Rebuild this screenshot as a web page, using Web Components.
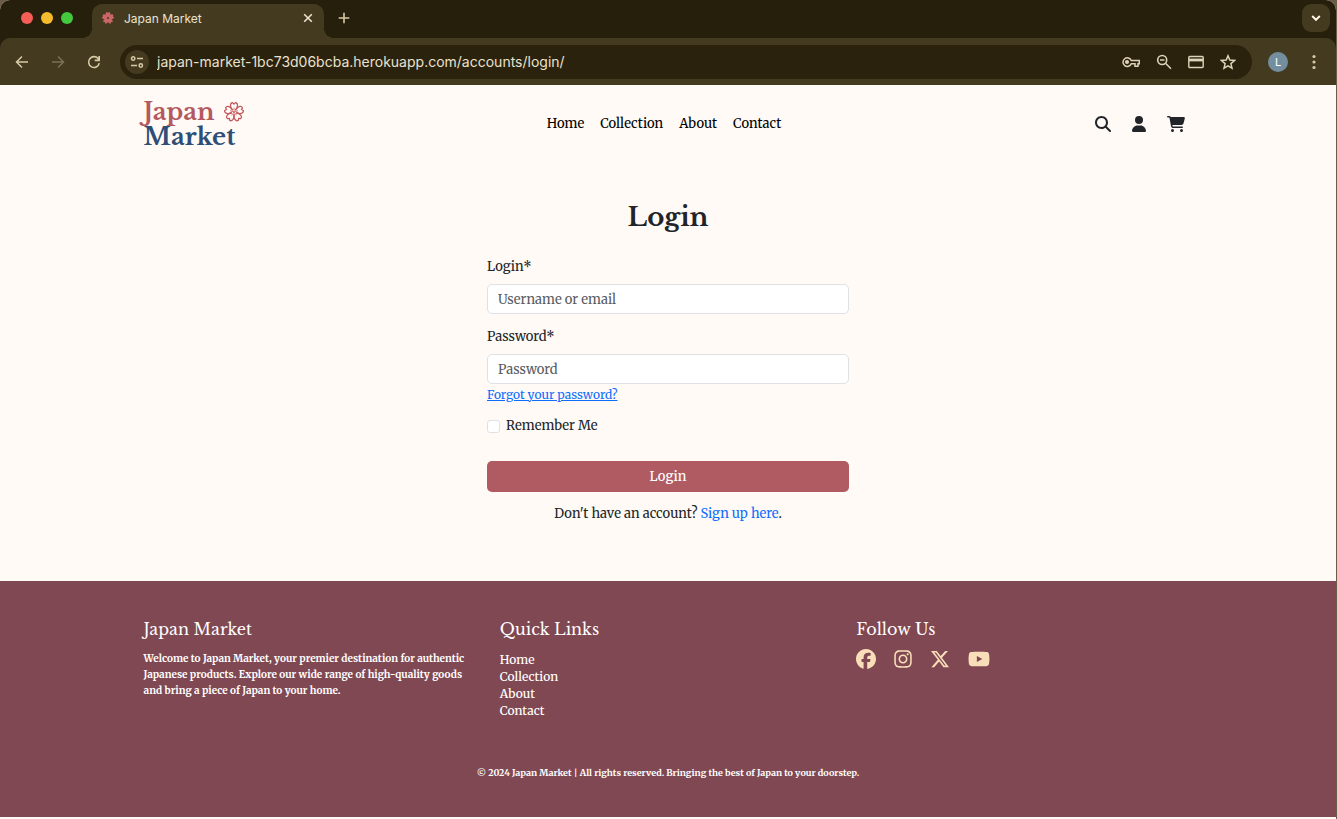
<!DOCTYPE html>
<html lang="en">
<head>
<meta charset="utf-8">
<title>Japan Market</title>
<style>
  html { background: #6b5c45; }
  body { margin: 0; min-height: 100vh; font-family: "Merriweather", "DejaVu Serif Condensed", "DejaVu Serif", serif; font-size: 13px; color: #212529; }
</style>
</head>
<body>
<browser-window>
  <browser-tabs slot="tabs">Japan Market</browser-tabs>
  <browser-toolbar slot="toolbar"></browser-toolbar>
  <site-header></site-header>
  <login-form></login-form>
  <site-footer></site-footer>
</browser-window>
<script>
const base = `<style>:host,*{box-sizing:border-box} svg{display:block;flex:none} a{color:inherit;text-decoration:none} button{font:inherit;color:inherit;background:none;border:0;padding:0;margin:0;display:grid;place-items:center;flex:none}</style>`;
function define(name, html) {
  const t = document.createElement('template');
  t.innerHTML = base + html;
  customElements.define(name, class extends HTMLElement {
    constructor() {
      super();
      this.attachShadow({ mode: 'open' }).append(t.content.cloneNode(true));
    }
  });
}
const petals = (fn) => [0, 72, 144, 216, 288].map(fn).join('');

define('browser-window', `
<style>
:host{display:flex;flex-direction:column;min-height:100vh;margin-right:1px;background:#fffaf5;border-radius:10px 10px 0 0;overflow:hidden}
.top{background:#261f0b}
</style>
<div class="top"><slot name="tabs"></slot><slot name="toolbar"></slot></div>
<div><slot></slot></div>`);

define('browser-tabs', `
<style>
:host{display:flex;height:38px;padding:4px 6px 0 21px;font-family:Inter,"Liberation Sans",sans-serif;font-size:12px;color:#ece3cf}
.lights{display:flex;gap:8px;margin-top:8px;width:71px}
.lights i{width:12px;height:12px;border-radius:50%}
.tab{position:relative;display:flex;align-items:center;gap:10px;width:232px;padding:0 10px 6px;background:#433a20;border-radius:10px 10px 0 0}
.tab::before,.tab::after{content:"";position:absolute;bottom:0;width:10px;height:10px}
.tab::before{right:100%;background:radial-gradient(circle at 0 0,transparent 10px,#433a20 10px)}
.tab::after{left:100%;background:radial-gradient(circle at 100% 0,transparent 10px,#433a20 10px)}
.tab span{flex:1}
.new{margin-left:14px;height:28px}
.more{margin-left:auto;width:28px;height:28px;border-radius:9px;background:#433a20}
</style>
<div class="lights"><i style="background:#f55e56"></i><i style="background:#f7bb2e"></i><i style="background:#43c83f"></i></div>
<div class="tab">
  <svg width="12" height="12" viewBox="-12 -12 24 24" fill="#cc6666">${petals(a => `<path transform="rotate(${a})" d="M0 0C-7-5-5-12-2-12L0-10 2-12C5-12 7-5 0 0z"/>`)}<circle r="2" fill="#433a20"/></svg>
  <span><slot></slot></span>
  <button aria-label="Close tab"><svg width="12" height="12" viewBox="0 0 12 12" fill="none" stroke="#ece3cf" stroke-width="1.600"><path d="M2.200 2.200l7.600 7.600M9.800 2.200l-7.600 7.600"/></svg></button>
</div>
<button class="new" aria-label="New tab"><svg width="12" height="12" viewBox="0 0 12 12" stroke="#d6cba4" stroke-width="1.600"><path d="M6 .7v10.600M.7 6h10.600"/></svg></button>
<button class="more" aria-label="Search tabs"><svg width="10" height="10" viewBox="0 0 10 10" fill="none" stroke="#fff5e0" stroke-width="2"><path d="M1.200 3l3.800 3.800L8.800 3"/></svg></button>`);

define('browser-toolbar', `
<style>
:host{display:flex;align-items:center;height:47px;padding:0 20px 0 15px;background:#433a20;border-radius:10px 10px 0 0;color:#d6cba4;font-family:Inter,"Liberation Sans",sans-serif}
.nav{display:flex;gap:22px;margin-right:19px}
.box{flex:1;min-width:0;display:flex;align-items:center;height:34px;border-radius:17px;background:#2a220c;padding:0 16px 0 5px}
.site{width:24px;height:24px;border-radius:50%;background:#433a20}
input{flex:1;min-width:0;margin:0 8px;padding:0;border:0;background:none;color:#e9e1cf;font-family:Inter,"Liberation Sans",sans-serif;font-size:14px;line-height:20px;outline:0}
.acts{display:flex;gap:16px}
.avatar{width:20px;height:20px;border-radius:50%;background:#738f9f;color:#fff;font-size:11px;margin:0 24px 0 16px}
</style>
<div class="nav">
<button aria-label="Back"><svg width="14" height="14" viewBox="0 0 14 14" fill="none" stroke="#d6cba4" stroke-width="1.500"><path d="M13 7H1.800M7 1.500L1.500 7 7 12.500"/></svg></button>
<button aria-label="Forward"><svg width="14" height="14" viewBox="0 0 14 14" fill="none" stroke="#7b7153" stroke-width="1.500"><path d="M1 7h11.200M7 1.500L12.500 7 7 12.500"/></svg></button>
<button aria-label="Reload"><svg width="14" height="14" viewBox="0 0 14 14" fill="none" stroke="#d6cba4" stroke-width="1.600"><path d="M12.300 8.200A5.400 5.400 0 1 1 11.500 4M12.200.9v4.500H7.700"/></svg></button>
</div>
<div class="box">
<button class="site" aria-label="Site information"><svg width="14" height="14" viewBox="0 0 14 14" fill="none" stroke="#d6cba4" stroke-width="1.500"><circle cx="3.200" cy="3.500" r="1.700"/><path d="M7 3.500h6M1 10.500h6"/><circle cx="10.800" cy="10.500" r="1.700"/></svg></button>
<input type="text" aria-label="Address" value="japan-market-1bc73d06bcba.herokuapp.com/accounts/login/">
<div class="acts">
<button aria-label="Passwords"><svg width="18" height="16" viewBox="0 0 18 16" fill="none" stroke="#ddd3b9" stroke-width="1.500"><path d="M9.300 6.500A4.300 4.300 0 1 0 9.300 9.800H13v2.500h3V9.800h1.300V6.500z"/><circle cx="5" cy="8" r="1.300" fill="#ddd3b9"/></svg></button>
<button aria-label="Zoom"><svg width="16" height="16" viewBox="0 0 16 16" fill="none" stroke="#ddd3b9" stroke-width="1.600"><circle cx="6.200" cy="6" r="4.500"/><path d="M9.500 9.300L15 14.800M4 6h4.400"/></svg></button>
<button aria-label="Payment methods"><svg width="16" height="16" viewBox="0 0 16 16" fill="none" stroke="#ddd3b9" stroke-width="1.400"><rect x=".8" y="2.500" width="14.400" height="11" rx="1"/><path d="M1 6h14" stroke-width="2.800"/></svg></button>
<button aria-label="Bookmark"><svg width="16" height="16" viewBox="0 0 16 16" fill="none" stroke="#ddd3b9" stroke-width="1.500"><path d="M8 1.800l1.800 4.300 4.700.4-3.600 3.100 1.100 4.600L8 11.800l-4 2.400 1.100-4.600L1.500 6.500l4.700-.4z"/></svg></button>
</div>
</div>
<button class="avatar" aria-label="Profile">L</button>
<button aria-label="Menu"><svg width="4" height="16" viewBox="0 0 4 16" fill="#d6cba4"><circle cx="2" cy="2.500" r="1.600"/><circle cx="2" cy="8" r="1.600"/><circle cx="2" cy="13.500" r="1.600"/></svg></button>`);

define('site-header', `
<style>
:host{display:block}
header{display:grid;grid-template-columns:1fr auto 1fr;align-items:center;width:80%;margin:0 auto;padding:0 10px;height:78px}
.logo{font-family:"Libre Baskerville","Liberation Serif",serif;font-weight:700;font-size:24px;line-height:25px;color:#b4595f;width:104px}
.logo div{display:flex;align-items:center;justify-content:space-between;width:100px}
.logo .m{color:#2e4e76}
nav{display:flex;gap:16px;margin-right:8px;color:#000;line-height:20px}
.icons{display:flex;justify-content:flex-end;align-items:center;gap:20px;padding-right:7px}
</style>
<header>
<a class="logo" href="#" aria-label="Japan Market home"><div>Japan<svg width="20" height="20" viewBox="-12 -12 24 24" fill="none" stroke="#c4585c" stroke-width="1.500">${petals(a => `<g transform="rotate(${a})"><path d="M-1.200-2.500C-5.500-5.500-4.800-10.800-1.800-11.200L0-9.500 1.800-11.200C4.800-10.800 5.500-5.500 1.200-2.500"/><path d="M0 0v-5" stroke-width=".9"/></g>`)}</svg></div><div class="m">Market</div></a>
<nav><a href="#">Home</a><a href="#">Collection</a><a href="#">About</a><a href="#">Contact</a></nav>
<div class="icons">
<a href="#" aria-label="Search"><svg width="16" height="16" viewBox="0 0 512 512" fill="#212529"><path d="M416 208c0 45.900-14.900 88.300-40 122.700L502.600 457.400c12.500 12.500 12.500 32.800 0 45.300s-32.800 12.500-45.300 0L330.700 376c-34.400 25.200-76.800 40-122.700 40C93.100 416 0 322.900 0 208S93.100 0 208 0S416 93.100 416 208zM208 352a144 144 0 1 0 0-288 144 144 0 1 0 0 288z"/></svg></a>
<a href="#" aria-label="Account"><svg width="16" height="16" viewBox="-32 0 512 512" fill="#212529"><path d="M224 256A128 128 0 1 0 224 0a128 128 0 1 0 0 256zm-45.700 48C79.800 304 0 383.800 0 482.300C0 498.700 13.300 512 29.700 512H418.300c16.400 0 29.700-13.300 29.700-29.700C448 383.800 368.200 304 269.700 304H178.300z"/></svg></a>
<a href="#" aria-label="Cart"><svg width="18" height="16" viewBox="0 0 576 512" fill="#212529"><path d="M0 24C0 10.700 10.700 0 24 0H69.500c22 0 41.500 12.800 50.600 32h411c26.300 0 45.500 25 38.600 50.400l-41 152.300c-8.500 31.400-37 53.300-69.500 53.300H170.700l5.400 28.500c2.200 11.300 12.100 19.500 23.600 19.500H488c13.300 0 24 10.700 24 24s-10.700 24-24 24H199.700c-34.600 0-64.300-24.600-70.700-58.500L77.400 54.500c-.7-3.800-4-6.500-7.900-6.500H24C10.700 48 0 37.300 0 24zM128 464a48 48 0 1 1 96 0 48 48 0 1 1-96 0zm336-48a48 48 0 1 1 0 96 48 48 0 1 1 0-96z"/></svg></a>
</div>
</header>`);

define('login-form', `
<style>
:host{display:block;padding:34px 16px 56px}
form{display:flex;flex-direction:column;max-width:362px;margin:0 auto;line-height:22px}
h1{margin:0 0 19px;text-align:center;font:700 26px/40px "Libre Baskerville","Liberation Serif",serif}
input[type=text],input[type=password]{width:100%;height:30px;margin:6px 0 0;padding:0 10px;border:1px solid #dee2e6;border-radius:5px;background:#fff;color:#212529;font:inherit;outline:0}
input::placeholder{color:#595c5f;opacity:1}
.pass{margin-top:12px}
.forgot{align-self:flex-start;font-size:12px;color:#0d6efd;text-decoration:underline}
.check{display:flex;align-items:center;gap:6px;margin-top:9px}
.check input{appearance:none;width:13px;height:13px;margin:0;border:1px solid #dee2e6;border-radius:3px;background:#fff}
button{height:31px;margin-top:24px;border-radius:5px;background:#b05a61;color:#fff;font-weight:500}
p{margin:11px 0 0;text-align:center}
p a{color:#0d6efd}
</style>
<form onsubmit="return false">
<h1>Login</h1>
<label for="user">Login*</label><input id="user" type="text" placeholder="Username or email">
<label class="pass" for="pw">Password*</label><input id="pw" type="password" placeholder="Password">
<a class="forgot" href="#">Forgot your password?</a>
<div class="check"><input id="remember" type="checkbox"><label for="remember">Remember Me</label></div>
<button type="submit">Login</button>
<p>Don't have an account? <a href="#">Sign up here</a>.</p>
</form>`);

define('site-footer', `
<style>
:host{display:block;background:#804852;color:#fff}
footer{width:80%;margin:0 auto;padding:36px 0}
.cols{display:grid;grid-template-columns:repeat(3,1fr)}
section{padding:0 10px}
h2{margin:0 0 10px;font:400 16px/24px "Libre Baskerville","Liberation Serif",serif}
p{margin:0;font-size:10px;line-height:16px;font-weight:700}
section p{max-width:332px}
ul{list-style:none;margin:0;padding:0;font-size:12px;line-height:17px;font-weight:500}
.social{display:flex;align-items:center;height:16px}
.social a{margin-right:18px}
.copy{margin-top:46px;text-align:center;font-size:9px}
</style>
<footer>
<div class="cols">
<section><h2>Japan Market</h2><p>Welcome to Japan Market, your premier destination for authentic Japanese products. Explore our wide range of high-quality goods and bring a piece of Japan to your home.</p></section>
<section><h2>Quick Links</h2><ul><li><a href="#">Home</a></li><li><a href="#">Collection</a></li><li><a href="#">About</a></li><li><a href="#">Contact</a></li></ul></section>
<section><h2>Follow Us</h2><div class="social">
<a href="#" aria-label="Facebook"><svg width="20" height="20" viewBox="0 0 512 512" fill="#f9deba"><path d="M512 256C512 114.600 397.400 0 256 0S0 114.600 0 256C0 376 82.700 476.800 194.200 504.500V334.200H141.400V256h52.800V222.300c0-87.100 39.400-127.500 125-127.500c16.200 0 44.200 3.200 55.700 6.400V172c-6-.6-16.500-1-29.600-1c-42 0-58.200 15.900-58.200 57.200V256h83.600l-14.400 78.200H287V510.100C413.800 494.800 512 386.900 512 256z"/></svg></a>
<a href="#" aria-label="Instagram"><svg width="18" height="20" viewBox="0 0 448 512" fill="#f9deba"><path d="M224.100 141c-63.600 0-114.900 51.300-114.900 114.900s51.300 114.900 114.900 114.900S339 319.500 339 255.900 287.700 141 224.100 141zm0 189.600c-41.100 0-74.700-33.500-74.700-74.700s33.500-74.700 74.700-74.700 74.700 33.500 74.700 74.700-33.600 74.700-74.700 74.700zm146.400-194.300c0 14.900-12 26.800-26.800 26.800-14.900 0-26.800-12-26.800-26.800s12-26.800 26.800-26.800 26.800 12 26.800 26.800zm76.100 27.200c-1.700-35.900-9.900-67.700-36.200-93.900-26.200-26.200-58-34.400-93.900-36.200-37-2.100-147.900-2.100-184.900 0-35.800 1.700-67.600 9.900-93.900 36.100s-34.400 58-36.200 93.900c-2.100 37-2.100 147.900 0 184.900 1.700 35.900 9.900 67.700 36.200 93.900s58 34.400 93.900 36.200c37 2.100 147.900 2.100 184.900 0 35.900-1.700 67.700-9.900 93.900-36.200 26.200-26.200 34.400-58 36.200-93.900 2.100-37 2.100-147.800 0-184.800zM398.800 388c-7.800 19.600-22.900 34.700-42.600 42.600-29.500 11.700-99.500 9-132.100 9s-102.700 2.600-132.100-9c-19.600-7.800-34.700-22.900-42.600-42.600-11.700-29.500-9-99.500-9-132.100s-2.600-102.700 9-132.100c7.800-19.600 22.900-34.700 42.600-42.600 29.500-11.700 99.500-9 132.100-9s102.700-2.600 132.100 9c19.600 7.800 34.700 22.900 42.600 42.600 11.700 29.500 9 99.500 9 132.100s2.700 102.700-9 132.100z"/></svg></a>
<a href="#" aria-label="X"><svg width="20" height="20" viewBox="0 0 512 512" fill="#f9deba"><path d="M389.200 48h70.600L305.600 224.200 487 464H345L233.700 318.600 106.500 464H35.800L200.700 275.500 26.800 48H172.400L272.900 180.900 389.200 48zM364.400 421.800h39.100L151.100 88h-42L364.400 421.800z"/></svg></a>
<a href="#" aria-label="YouTube"><svg width="22" height="20" viewBox="0 0 576 512" fill="#f9deba"><path d="M549.700 124.100c-6.300-23.700-24.800-42.300-48.300-48.600C458.800 64 288 64 288 64S117.200 64 74.600 75.500c-23.500 6.300-42 24.900-48.300 48.600-11.400 42.900-11.400 132.300-11.400 132.300s0 89.400 11.400 132.300c6.300 23.700 24.800 41.500 48.300 47.800C117.200 448 288 448 288 448s170.800 0 213.400-11.500c23.500-6.300 42-24.200 48.300-47.800 11.400-42.900 11.400-132.300 11.400-132.300s0-89.400-11.400-132.300zM232.200 337.600V175.200l142.700 81.200-142.700 81.200z"/></svg></a>
</div></section>
</div>
<p class="copy">© 2024 Japan Market | All rights reserved. Bringing the best of Japan to your doorstep.</p>
</footer>`);
</script>
</body>
</html>
